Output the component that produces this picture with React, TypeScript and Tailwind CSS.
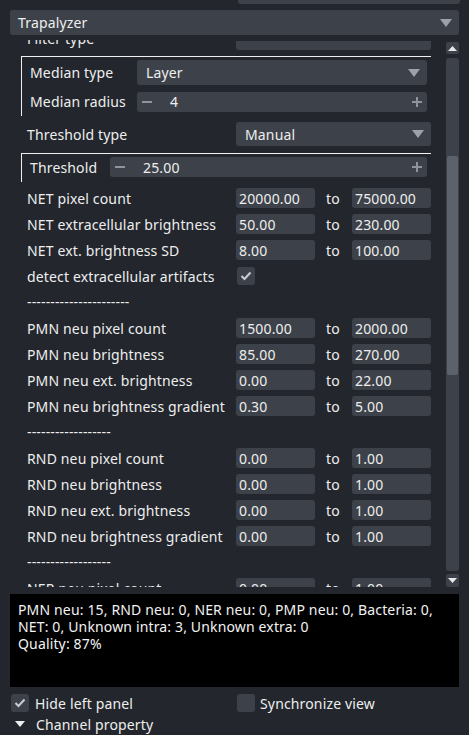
import React from 'react'

const font = { fontFamily: '"Noto Sans", "DejaVu Sans", sans-serif' }

function Caret({ className = '' }: { className?: string }) {
  return (
    <svg width="12" height="8" viewBox="0 0 12 8" className={className}>
      <polygon points="0,0 12,0 6,8" fill="#9ea2a8" />
    </svg>
  )
}

function Combo({ value, className = '' }: { value: string; className?: string }) {
  return (
    <div className={`flex items-center justify-between bg-[#3d424a] rounded-[3px] pl-[9px] pr-[7px] ${className}`}>
      <span>{value}</span>
      <Caret />
    </div>
  )
}

function Spin({ value, className = '' }: { value: string; className?: string }) {
  return (
    <div className={`relative flex items-center bg-[#3d424a] rounded-[3px] h-[20px] ${className}`}>
      <div className="w-[10px] h-[2px] bg-[#8f949a] ml-[5px]" />
      <span className="ml-[18px]">{value}</span>
      <svg width="10" height="10" viewBox="0 0 10 10" className="ml-auto mr-[5px]">
        <rect x="0" y="4" width="10" height="2" fill="#8f949a" />
        <rect x="4" y="0" width="2" height="10" fill="#8f949a" />
      </svg>
    </div>
  )
}

function Field({ value }: { value: string }) {
  return (
    <div className="w-[79px] h-[20px] bg-[#3d424a] rounded-[3px] flex items-center pl-[3px]">{value}</div>
  )
}

function CheckBox({ checked }: { checked: boolean }) {
  return (
    <div className="w-[18px] h-[18px] bg-[#3d424a] rounded-[3px] flex items-center justify-center">
      {checked && (
        <svg width="12" height="10" viewBox="0 0 12 10">
          <polyline points="1.5,5 4.5,8 10.5,1.5" fill="none" stroke="#c9ccd0" strokeWidth="2" />
        </svg>
      )}
    </div>
  )
}

type Row =
  | { kind: 'range'; label: string; from: string; to: string }
  | { kind: 'check'; label: string }
  | { kind: 'sep'; dashes: number }

const rows: Row[] = [
  { kind: 'range', label: 'NET pixel count', from: '20000.00', to: '75000.00' },
  { kind: 'range', label: 'NET extracellular brightness', from: '50.00', to: '230.00' },
  { kind: 'range', label: 'NET ext. brightness SD', from: '8.00', to: '100.00' },
  { kind: 'check', label: 'detect extracellular artifacts' },
  { kind: 'sep', dashes: 22 },
  { kind: 'range', label: 'PMN neu pixel count', from: '1500.00', to: '2000.00' },
  { kind: 'range', label: 'PMN neu brightness', from: '85.00', to: '270.00' },
  { kind: 'range', label: 'PMN neu ext. brightness', from: '0.00', to: '22.00' },
  { kind: 'range', label: 'PMN neu brightness gradient', from: '0.30', to: '5.00' },
  { kind: 'sep', dashes: 18 },
  { kind: 'range', label: 'RND neu pixel count', from: '0.00', to: '1.00' },
  { kind: 'range', label: 'RND neu brightness', from: '0.00', to: '1.00' },
  { kind: 'range', label: 'RND neu ext. brightness', from: '0.00', to: '1.00' },
  { kind: 'range', label: 'RND neu brightness gradient', from: '0.00', to: '1.00' },
  { kind: 'sep', dashes: 18 },
  { kind: 'range', label: 'NER neu pixel count', from: '0.00', to: '1.00' },
  { kind: 'range', label: 'NER neu brightness', from: '0.00', to: '1.00' },
]

export default function App() {
  return (
    <div
      className="w-[469px] h-[735px] bg-[#23262d] text-[#eeeeee] text-[14px] tracking-[0.15px] overflow-hidden"
      style={font}
    >
      {/* bottom edge of the widget above */}
      <div className="ml-[238px] w-[222px] h-[4px] bg-[#3d424a] rounded-b-[3px]" />

      {/* section header */}
      <div className="mt-[6px] mx-[10px] h-[25px] bg-[#3d424a] rounded-[3px] flex items-center justify-between pl-[8px] pr-[7px]">
        <span>Trapalyzer</span>
        <Caret />
      </div>

      {/* scroll area */}
      <div className="mt-[5px] h-[547px] flex pl-[10px]">
        <div className="w-[431px] overflow-hidden">
          <div className="-mt-[14px] flex flex-col">
            <div className="flex h-[24px]">
              <span className="pl-[17px] w-[226px] self-center">Filter type</span>
              <div className="w-[195px] h-[9px] self-end bg-[#3d424a] rounded-b-[3px]" />
            </div>

            <div className="mt-[6px] ml-[11px] w-[410px] border-t border-l border-[#f0f0f0] pt-[3px] pb-[4px] pr-[4px] flex flex-col gap-[6px]">
              <div className="flex items-center">
                <span className="pl-[8px] w-[115px]">Median type</span>
                <Combo value="Layer" className="flex-1 h-[25px]" />
              </div>
              <div className="flex items-center">
                <span className="pl-[8px] w-[115px]">Median radius</span>
                <Spin value="4" className="flex-1" />
              </div>
            </div>

            <div className="mt-[6px] flex items-center h-[24px]">
              <span className="pl-[17px] w-[226px]">Threshold type</span>
              <Combo value="Manual" className="w-[195px] h-[24px]" />
            </div>

            <div className="mt-[7px] ml-[11px] w-[410px] border-t border-l border-[#f0f0f0] pt-[3px] pb-[4px] pr-[4px] flex">
              <span className="pl-[8px] w-[88px] flex items-center">Threshold</span>
              <Spin value="25.00" className="flex-1" />
            </div>

            <div className="mt-[6px] flex flex-col gap-[6px]">
              {rows.map((r, i) => (
                <div key={i} className="flex items-center h-[20px]">
                  {r.kind === 'sep' ? (
                    <span className="pl-[17px] leading-none">{'-'.repeat(r.dashes)}</span>
                  ) : (
                    <>
                      <span className="pl-[17px] w-[226px] whitespace-nowrap">{r.label}</span>
                      {r.kind === 'check' ? (
                        <div className="ml-[1px]">
                          <CheckBox checked />
                        </div>
                      ) : (
                        <>
                          <Field value={r.from} />
                          <span className="w-[37px] pl-[11px]">to</span>
                          <Field value={r.to} />
                        </>
                      )}
                    </>
                  )}
                </div>
              ))}
            </div>
          </div>
        </div>

        {/* scrollbar */}
        <div className="ml-[5px] w-[13px] flex flex-col pt-[2px]">
          <div className="h-[12px] bg-[#3d424a] rounded-[2px] flex items-center justify-center">
            <svg width="9" height="5" viewBox="0 0 9 5">
              <polygon points="0,5 9,5 4.5,0" fill="#e8e8e8" />
            </svg>
          </div>
          <div className="mt-[4px] flex-1 bg-[#3d424a] rounded-[3px] px-[1px]">
            <div className="mt-[98px] h-[219px] bg-[#5b626b] rounded-[2px]" />
          </div>
          <div className="mt-[3px] h-[13px] bg-[#3d424a] rounded-[2px] flex items-center justify-center">
            <svg width="9" height="5" viewBox="0 0 9 5">
              <polygon points="0,0 9,0 4.5,5" fill="#e8e8e8" />
            </svg>
          </div>
        </div>
      </div>

      {/* results */}
      <div className="mt-[7px] mx-[10px] h-[93px] bg-black pl-[8px] pt-[7px] leading-[17px] text-[#f2f2f2]">
        <div>PMN neu: 15, RND neu: 0, NER neu: 0, PMP neu: 0, Bacteria: 0,</div>
        <div>NET: 0, Unknown intra: 3, Unknown extra: 0</div>
        <div>Quality: 87%</div>
      </div>

      <div className="mt-[7px] flex items-center h-[18px]">
        <div className="ml-[11px]">
          <CheckBox checked />
        </div>
        <span className="ml-[6px] w-[202px]">Hide left panel</span>
        <CheckBox checked={false} />
        <span className="ml-[5px]">Synchronize view</span>
      </div>
      <div className="mt-[2px] h-[20px] flex items-center">
        <svg width="10" height="6" viewBox="0 0 10 6" className="ml-[15px]">
          <polygon points="0,0 10,0 5,6" fill="#eeeeee" />
        </svg>
        <span className="ml-[11px]">Channel property</span>
      </div>
    </div>
  )
}
